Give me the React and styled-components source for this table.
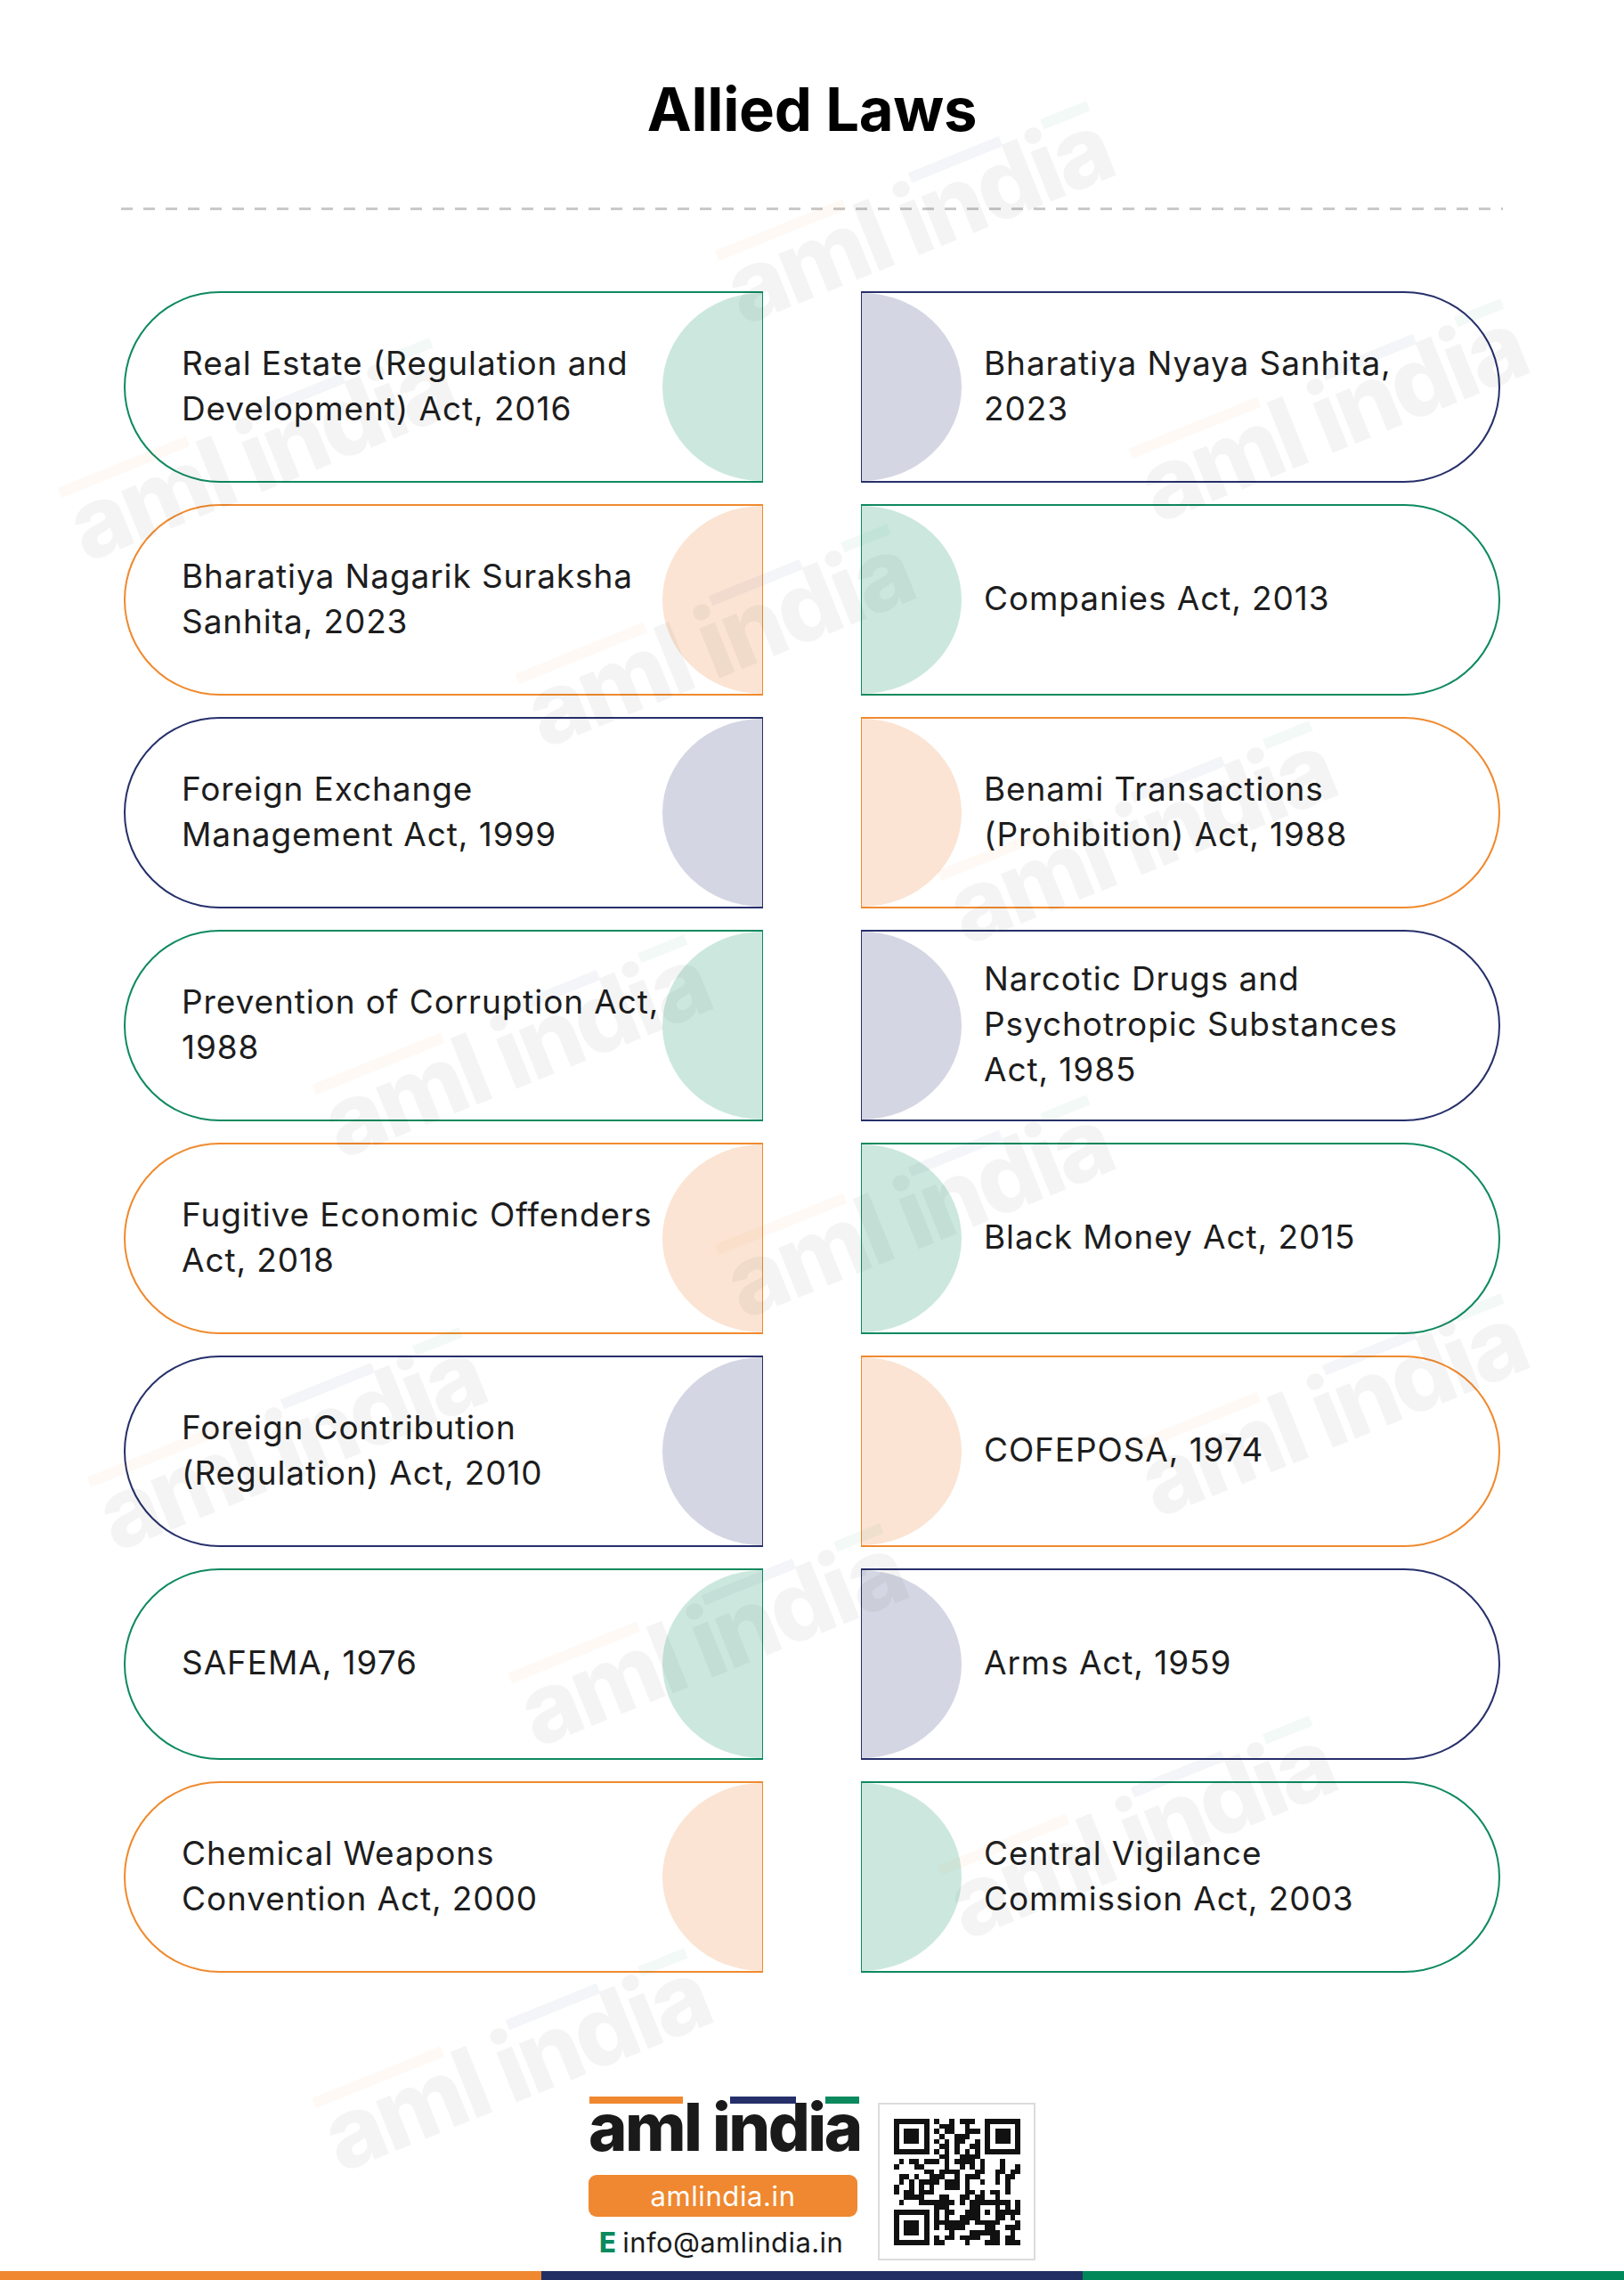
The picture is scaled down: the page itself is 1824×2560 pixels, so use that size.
import React from "react";
import styled, { createGlobalStyle } from "styled-components";

const GlobalStyle = createGlobalStyle`
  html, body {
    margin: 0;
    padding: 0;
    background: #ffffff;
  }
  * {
    box-sizing: border-box;
  }
`;

const palette = {
  green: { line: "#0f8a5f", tint: "#cce8de" },
  orange: { line: "#f08a2e", tint: "#fbe4d3" },
  navy: { line: "#27306b", tint: "#d4d6e3" },
};

const laws = [
  { text: "Real Estate (Regulation and\nDevelopment) Act, 2016", tone: "green" },
  { text: "Bharatiya Nyaya Sanhita,\n2023", tone: "navy" },
  { text: "Bharatiya Nagarik Suraksha\nSanhita, 2023", tone: "orange" },
  { text: "Companies Act, 2013", tone: "green" },
  { text: "Foreign Exchange\nManagement Act, 1999", tone: "navy" },
  { text: "Benami Transactions\n(Prohibition) Act, 1988", tone: "orange" },
  { text: "Prevention of Corruption Act,\n1988", tone: "green" },
  { text: "Narcotic Drugs and\nPsychotropic Substances\nAct, 1985", tone: "navy" },
  { text: "Fugitive Economic Offenders\nAct, 2018", tone: "orange" },
  { text: "Black Money Act, 2015", tone: "green" },
  { text: "Foreign Contribution\n(Regulation) Act, 2010", tone: "navy" },
  { text: "COFEPOSA, 1974", tone: "orange" },
  { text: "SAFEMA, 1976", tone: "green" },
  { text: "Arms Act, 1959", tone: "navy" },
  { text: "Chemical Weapons\nConvention Act, 2000", tone: "orange" },
  { text: "Central Vigilance\nCommission Act, 2003", tone: "green" },
];

// watermark centres, page coordinates
const marks = [
  [1032, 248], [294, 514], [1497, 470], [808, 723], [1282, 944], [580, 1184],
  [1032, 1364], [327, 1625], [1497, 1587], [800, 1845], [1282, 2061], [580, 2322],
];

const Page = styled.div`
  position: relative;
  width: 1824px;
  height: 2560px;
  overflow: hidden;
  display: flex;
  flex-direction: column;
  align-items: center;
  font-family: Inter, "Open Sans", sans-serif;
  color: #1f1f1f;
`;

const Title = styled.h1`
  margin: 89px 0 0;
  font-size: 67px;
  line-height: 1;
  font-weight: 700;
  color: #000;
  letter-spacing: -0.3px;
`;

const Divider = styled.div`
  width: 1552px;
  height: 3px;
  margin-top: 77px;
  background: repeating-linear-gradient(to right, #c9c9c9 0 13px, transparent 13px 25px);
`;

const Grid = styled.div`
  margin-top: 91px;
  display: grid;
  grid-template-columns: 718px 718px;
  grid-auto-rows: 215px;
  column-gap: 110px;
  row-gap: 24px;
`;

const Card = styled.div`
  display: flex;
  flex-direction: ${(p) => (p.$right ? "row-reverse" : "row")};
  overflow: hidden;
  border: 2.5px solid ${(p) => palette[p.$tone].line};
  ${(p) => (p.$right ? "border-left-width: 1.5px;" : "border-right-width: 1.5px;")}
  border-radius: ${(p) => (p.$right ? "0 108px 108px 0" : "108px 0 0 108px")};
`;

const Label = styled.div`
  flex: 1;
  display: flex;
  align-items: center;
  padding-left: ${(p) => (p.$right ? "25px" : "63px")};
  padding-bottom: 4px;
  font-size: 37px;
  line-height: 51px;
  white-space: pre-line;
  letter-spacing: 0.9px;
  color: #1d1d1d;
`;

const Tint = styled.div`
  width: 112px;
  flex-shrink: 0;
  background: ${(p) => palette[p.$tone].tint};
  border-radius: ${(p) => (p.$right ? "0 100% 100% 0 / 0 50% 50% 0" : "100% 0 0 100% / 50% 0 0 50%")};
`;

const Footer = styled.div`
  margin-top: 145px;
  display: flex;
  align-items: flex-start;
  gap: 23px;
`;

const Brand = styled.div`
  width: 302px;
  display: flex;
  flex-direction: column;
  align-items: stretch;
`;

const Logo = styled.div`
  font-family: Inter, "Open Sans", sans-serif;
  font-weight: 800;
  font-size: ${(p) => p.$size || 74}px;
  line-height: 1;
  letter-spacing: -0.035em;
  color: #1a1a1a;
  white-space: nowrap;
  margin-top: -9px;
`;

const barColors = { orange: "#ef8830", navy: "#25306a", green: "#0a8a5e" };

const Barred = styled.span`
  position: relative;
  &::before {
    content: "";
    position: absolute;
    left: 0.02em;
    right: ${(p) => p.$reach || "0.02em"};
    top: 0.15em;
    height: 0.11em;
    background: ${(p) => barColors[p.$bar]};
  }
`;

const Pill = styled.div`
  margin-top: 17px;
  height: 47px;
  border-radius: 9px;
  background: #ef8830;
  color: #fff;
  display: flex;
  align-items: center;
  justify-content: center;
  font-size: 31px;
  letter-spacing: 0.6px;
`;

const Email = styled.div`
  margin-top: 9px;
  padding-left: 12px;
  font-size: 31px;
  line-height: 40px;
  letter-spacing: 0.4px;
  color: #1a1a1a;
  b {
    color: #0a8a5e;
    font-weight: 800;
    margin-right: 7px;
  }
`;

const QrBox = styled.div`
  width: 177px;
  height: 177px;
  border: 2px solid #dcdcdc;
  display: flex;
  align-items: center;
  justify-content: center;
  margin-top: 1px;
`;

const Stripe = styled.div`
  margin-top: auto;
  width: 100%;
  height: 10px;
  display: grid;
  grid-template-columns: 1fr 1fr 1fr;
`;

const StripePart = styled.div`
  background: ${(p) => p.$c};
`;

const Watermark = styled.div`
  position: absolute;
  transform: translate(-50%, -50%) rotate(-22deg);
  opacity: 0.045;
  pointer-events: none;
`;

const LogoMark = ({ size }) => (
  <Logo $size={size}>
    <Barred $bar="orange">am</Barred>l i<Barred $bar="navy" $reach="-0.42em">n</Barred>di
    <Barred $bar="green">a</Barred>
  </Logo>
);

const buildQr = () => {
  const n = 25;
  const grid = Array.from({ length: n }, () => Array(n).fill(0));
  let seed = 91;
  const rnd = () => {
    seed = (seed * 1103515245 + 12345) % 2147483648;
    return seed / 2147483648;
  };
  for (let y = 0; y < n; y++) for (let x = 0; x < n; x++) grid[y][x] = rnd() > 0.5 ? 1 : 0;
  const finder = (ox, oy) => {
    for (let y = -1; y < 8; y++)
      for (let x = -1; x < 8; x++) {
        const gx = ox + x;
        const gy = oy + y;
        if (gx < 0 || gy < 0 || gx >= n || gy >= n) continue;
        const ring = Math.max(Math.abs(x - 3), Math.abs(y - 3));
        grid[gy][gx] = ring === 4 || ring === 2 ? 0 : 1;
      }
  };
  finder(0, 0);
  finder(18, 0);
  finder(0, 18);
  for (let i = 8; i < 17; i++) {
    grid[6][i] = i % 2 === 0 ? 1 : 0;
    grid[i][6] = i % 2 === 0 ? 1 : 0;
  }
  for (let y = -2; y <= 2; y++)
    for (let x = -2; x <= 2; x++) {
      const ring = Math.max(Math.abs(x), Math.abs(y));
      grid[18 + y][18 + x] = ring === 1 ? 0 : 1;
    }
  return grid;
};

const QrCode = () => {
  const grid = buildQr();
  return (
    <svg width="142" height="142" viewBox="0 0 25 25" shapeRendering="crispEdges">
      {grid.flatMap((row, y) =>
        row.map((v, x) => (v ? <rect key={`${x}-${y}`} x={x} y={y} width="1" height="1" fill="#111" /> : null))
      )}
    </svg>
  );
};

const App = () => (
  <Page>
    <GlobalStyle />
    <Title>Allied Laws</Title>
    <Divider />
    <Grid>
      {laws.map((law, i) => {
        const right = i % 2 === 1;
        return (
          <Card key={law.text} $tone={law.tone} $right={right}>
            <Label $right={right}>{law.text}</Label>
            <Tint $tone={law.tone} $right={right} />
          </Card>
        );
      })}
    </Grid>
    <Footer>
      <Brand>
        <LogoMark />
        <Pill>amlindia.in</Pill>
        <Email>
          <b>E</b>info@amlindia.in
        </Email>
      </Brand>
      <QrBox>
        <QrCode />
      </QrBox>
    </Footer>
    <Stripe>
      <StripePart $c="#ef8830" />
      <StripePart $c="#222f63" />
      <StripePart $c="#00875a" />
    </Stripe>
    {marks.map(([x, y]) => (
      <Watermark key={`${x}-${y}`} style={{ left: x, top: y }}>
        <LogoMark size={110} />
      </Watermark>
    ))}
  </Page>
);

export default App;
